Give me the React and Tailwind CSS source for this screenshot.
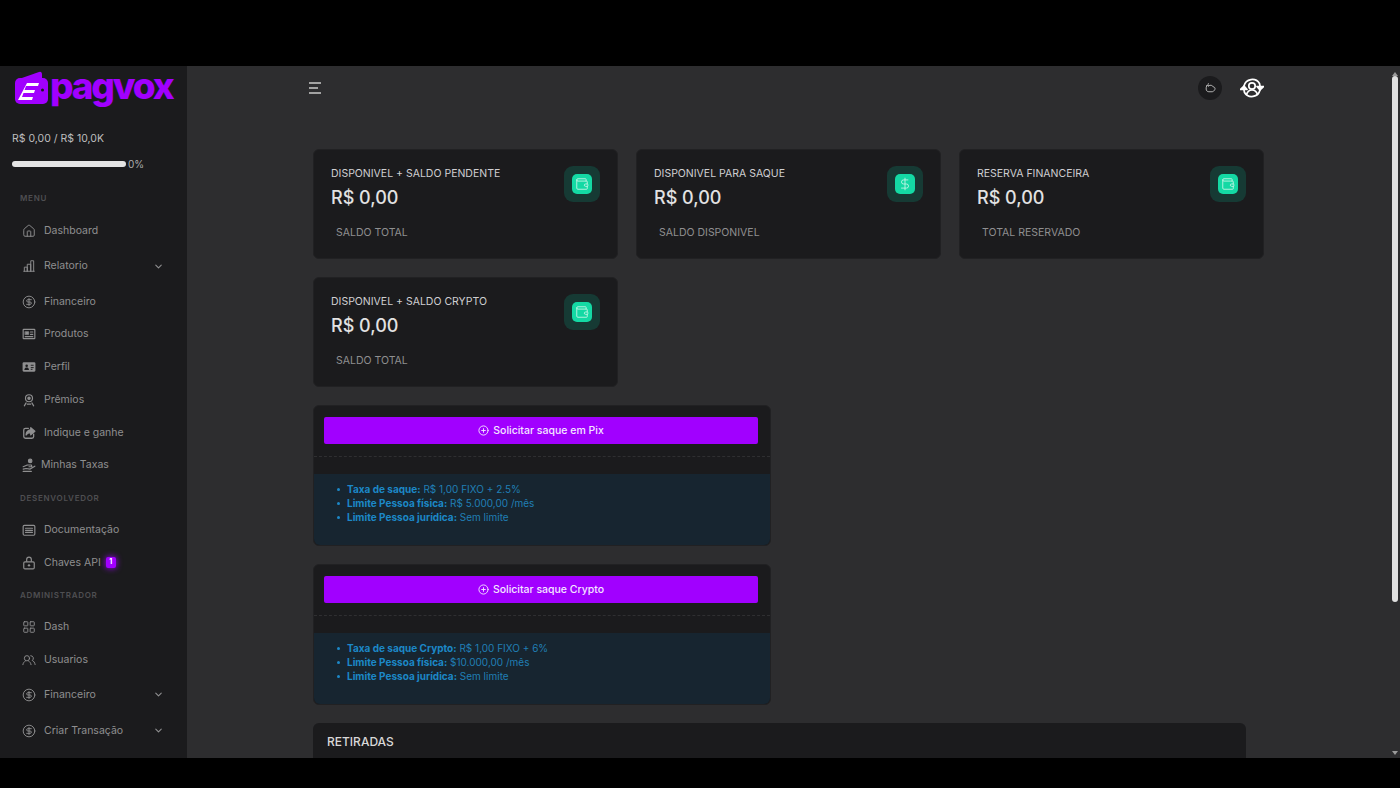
import React from "react";
import { House, ChevronDown, CircleDollarSign, Wallet, DollarSign, CirclePlus, LayoutGrid } from "lucide-react";

const Svg = ({ children, strokeWidth = 1.8, ...p }) => (
  <svg viewBox="0 0 24 24" fill="none" stroke="currentColor" strokeWidth={strokeWidth} strokeLinecap="round" strokeLinejoin="round" {...p}>{children}</svg>
);
const Bars = (p) => (
  <Svg {...p}><path d="M3 21h18M4 21v-7h5v7M9 21V9h6v12M15 21V3h5v18" /></Svg>
);
const ShareBox = (p) => (
  <Svg {...p} strokeWidth={2.2}>
    <path d="M11 4H6a3 3 0 0 0-3 3v11a3 3 0 0 0 3 3h11a3 3 0 0 0 3-3v-4" />
    <path d="M15 3l7 6-7 6v-3.500c-4 0-6.500 1-8 4 0-5 3-9 8-9z" fill="currentColor" />
  </Svg>
);
const NewsBox = (p) => (
  <Svg {...p} strokeWidth={2}>
    <rect x="2" y="4" width="20" height="16" rx="1" />
    <rect x="5.500" y="8" width="6" height="5" fill="currentColor" strokeWidth={1} />
    <path d="M14.500 8.500h4M14.500 12.500h4M5.500 16.500h13" />
  </Svg>
);
const Card = (p) => (
  <svg viewBox="0 0 24 24" {...p}>
    <rect x="1" y="4" width="22" height="16" rx="2" fill="currentColor" />
    <circle cx="8" cy="10" r="2.200" fill="#1b1b1d" />
    <path d="M4 17c.5-3 2-4 4-4s3.500 1 4 4z" fill="#1b1b1d" />
    <path d="M15 9h5M15 13h5M15 16h3" stroke="#1b1b1d" strokeWidth="1.600" />
  </svg>
);
const Medal = (p) => (
  <Svg {...p} strokeWidth={2}>
    <circle cx="12" cy="9" r="6" />
    <circle cx="12" cy="9" r="2" fill="currentColor" />
    <path d="M4 22l3-5M20 22l-3-5M9 19h6" />
  </Svg>
);
const HandUser = (p) => (
  <Svg {...p} strokeWidth={2}>
    <circle cx="14" cy="5" r="3" fill="currentColor" />
    <path d="M10 12h6l1 3h-5" />
    <path d="M2 15l7-3M2 19l5-1 7 1 8-5M2 23h14" />
  </Svg>
);
const DocBox = (p) => (
  <Svg {...p} strokeWidth={2}>
    <rect x="2" y="4" width="20" height="17" rx="2" />
    <path d="M6 9h12M6 12.500h12M6 16h12" />
  </Svg>
);
const LockBox = (p) => (
  <svg viewBox="0 0 24 24" {...p}>
    <path d="M8 10V6a4 4 0 0 1 8 0v4" fill="none" stroke="currentColor" strokeWidth="2" />
    <rect x="3" y="10" width="18" height="12" rx="2" fill="none" stroke="currentColor" strokeWidth="2" />
    <circle cx="12" cy="16" r="2" fill="currentColor" />
  </svg>
);
const TwoUsers = (p) => (
  <Svg {...p}>
    <circle cx="8.500" cy="9" r="4.500" />
    <path d="M1.500 20c.5-3 2-5 4-6M15.500 20c-.5-3-2-5-4-6" />
    <path d="M15 4.600a4.500 4.500 0 0 1 2.500 8.200c2.500 1 4.500 3.500 5 7" />
  </Svg>
);
const Logo = () => (
  <svg viewBox="0 0 36 36" className="w-[36px] h-[36px] shrink-0">
    <path d="M5 10 L25 3 q3 -1 3 3 v4 z" fill="#a100ff" />
    <rect x="1" y="9" width="33" height="26" rx="5" fill="#a100ff" />
    <path d="M13 14h12l-1 3H12l-1.500 4H21l-1 3H9.500L8 28h11l-1 3H4z" fill="#fff" />
    <circle cx="28.500" cy="21" r="1.500" fill="#1b1b1d" />
  </svg>
);
const MoonCloud = (p) => (
  <Svg {...p}>
    <path d="M8 3c-1 2-1 3 0 5M5 7c2-1 3-1 4 0 2-2 7-1 8 2 3 0 4 3 3 5-1 2-3 4-5 4H9c-3 0-5-2-5-5 0-2 0-4 1-6z" />
  </Svg>
);
const UserSwap = (p) => (
  <Svg {...p} strokeWidth={1.700}>
    <path d="M4 10a8.500 8.500 0 0 1 15.500-2.500l.5 2.500" />
    <path d="M20 14a8.500 8.500 0 0 1-15.500 2.500L4 14" />
    <path d="M23.500 10.500L20 14l-3-3.500z" fill="currentColor" />
    <path d="M.5 13.500L4 10l3 3.500z" fill="currentColor" />
    <circle cx="12" cy="10" r="3.200" />
    <path d="M6.500 18.500c1-3 3-4.500 5.500-4.500s4.500 1.500 5.500 4.500" />
  </Svg>
);
const Burger = () => (
  <svg viewBox="0 0 13 12" className="w-[13px] h-[12px]" stroke="#c9c9c9" strokeWidth="1.300">
    <path d="M0 1h12M0 6h9M0 11h12" />
  </svg>
);

const SideItem = ({ icon: I, label, h, chevron, badge, tight }) => (
  <div className={`flex items-center pl-[22px] pr-[23px] text-[#8f8f90] text-[10.500px] ${h}`}>
    <I className={`w-[14px] h-[14px] shrink-0 ${tight ? "mr-[5px]" : "mr-[8px]"}`} strokeWidth={1.6} />
    <span>{label}</span>
    {badge && <span className="ml-[5px] w-[10px] h-[11px] rounded-[2px] bg-[#a100ff] text-white text-[7px] font-bold flex items-center justify-center shadow-[0_0_6px_#a100ff]">{badge}</span>}
    {chevron && <ChevronDown className="ml-auto w-[11px] h-[11px]" strokeWidth={2.4} />}
  </div>
);
const SideHead = ({ label, h }) => (
  <div className={`flex items-center pl-[20px] text-[#4f4f52] text-[8px] font-semibold tracking-[0.09em] ${h}`}>{label}</div>
);

const StatCard = ({ title, foot, icon: I }) => (
  <div className="w-[305px] h-[110px] rounded-[6px] bg-[#1b1b1d] border border-[#212123] flex flex-col pl-[17px] pr-[17px] pt-[16px]">
    <div className="flex justify-between">
      <div>
        <div className="text-[#cfcfd2] text-[10.500px] leading-[16px]">{title}</div>
        <div className="text-[#e2e2e2] text-[18px] font-medium leading-[24px] mt-[4px]">R$ 0,00</div>
      </div>
      <div className="w-[36px] h-[36px] rounded-[9px] bg-[#163a34] flex items-center justify-center">
        <div className="w-[20px] h-[20px] rounded-[5px] bg-[#14d9a4] flex items-center justify-center">
          <I className="w-[14px] h-[14px] text-[#c5f5e6]" strokeWidth={1.5} />
        </div>
      </div>
    </div>
    <div className="text-[#8f8f90] text-[10.500px] pl-[5px] mt-[15px] leading-[16px]">{foot}</div>
  </div>
);

const WithdrawCard = ({ button, lines, mt }) => (
  <div className={`w-[458px] rounded-[6px] bg-[#1b1b1d] border border-[#212123] flex flex-col ${mt}`}>
    <div className="pl-[10px] pr-[12px] pt-[11px] pb-[12px] border-b border-dashed border-[#2f2f31]">
      <div className="h-[27px] rounded-[2px] bg-[#a100ff] text-[#f4e6ff] text-[10.500px] font-medium flex items-center justify-center gap-[4px]">
        <CirclePlus className="w-[11px] h-[11px]" strokeWidth={2} />
        {button}
      </div>
    </div>
    <div className="h-[17px]" />
    <div className="h-[71px] bg-[#172530] rounded-b-[6px] pt-[8px] pl-[23px]">
      <ul className="text-[#1c88c7] text-[10px] leading-[14.200px]">
        {lines.map(([b, t]) => (
          <li key={b} className="flex items-center">
            <span className="w-[3px] h-[3px] rounded-full bg-[#1c88c7] mr-[7px]" />
            <span><b className="font-bold">{b}</b> <span className="text-[#207fb5]">{t}</span></span>
          </li>
        ))}
      </ul>
    </div>
  </div>
);

export default function App() {
  return (
    <div className="w-[1400px] h-[788px] bg-black flex flex-col overflow-hidden font-['Inter','Liberation_Sans',sans-serif]">
      <div className="h-[66px] shrink-0 bg-black" />
      <div className="h-[692px] flex">
        <aside className="w-[187px] shrink-0 bg-[#1b1b1d] flex flex-col">
          <div className="h-[42px] pl-[14px] flex items-center">
            <Logo />
            <span className="text-[#a100ff] text-[37px] font-extrabold tracking-[-2.2px] leading-[42px] pb-[2px]">pagvox</span>
          </div>
          <div className="text-[#bdbdbd] text-[10.500px] pl-[12px] mt-[24px] leading-[14px]">R$ 0,00 / R$ 10,0K</div>
          <div className="flex items-center pl-[12px] mt-[12px] h-[12px]">
            <div className="w-[114px] h-[6px] rounded-full bg-[#e4e4e4]" />
            <span className="text-[#aeaeae] text-[10px] ml-[2px]">0%</span>
          </div>
          <div className="h-[20px]" />
          <SideHead label="MENU" h="h-[16px]" />
          <div className="h-[9px]" />
          <SideItem icon={House} label="Dashboard" h="h-[32px]" />
          <SideItem icon={Bars} label="Relatorio" h="h-[38px]" chevron />
          <SideItem icon={CircleDollarSign} label="Financeiro" h="h-[33px]" />
          <SideItem icon={NewsBox} label="Produtos" h="h-[32px]" />
          <SideItem icon={Card} label="Perfil" h="h-[33px]" />
          <SideItem icon={Medal} label="Prêmios" h="h-[33px]" />
          <SideItem icon={ShareBox} label="Indique e ganhe" h="h-[33px]" />
          <SideItem icon={HandUser} label="Minhas Taxas" h="h-[32px]" tight />
          <SideHead label="DESENVOLVEDOR" h="h-[33px]" />
          <SideItem icon={DocBox} label="Documentação" h="h-[32px]" />
          <SideItem icon={LockBox} label="Chaves API" h="h-[33px]" badge="1" />
          <SideHead label="ADMINISTRADOR" h="h-[32px]" />
          <SideItem icon={LayoutGrid} label="Dash" h="h-[32px]" />
          <SideItem icon={TwoUsers} label="Usuarios" h="h-[33px]" />
          <SideItem icon={CircleDollarSign} label="Financeiro" h="h-[37px]" chevron />
          <SideItem icon={CircleDollarSign} label="Criar Transação" h="h-[35px]" chevron />
        </aside>

        <main className="flex-1 bg-[#2d2d2f] flex overflow-hidden">
          <div className="flex-1 overflow-hidden pl-[126px]">
            <header className="h-[83px] w-[951px] flex items-center justify-between pb-[39px]">
              <div className="-ml-[4px]"><Burger /></div>
              <div className="flex items-center gap-[18px]">
                <div className="w-[24px] h-[24px] rounded-full bg-[#1b1b1d] flex items-center justify-center">
                  <MoonCloud className="w-[13px] h-[13px] text-[#b5b5b5]" />
                </div>
                <UserSwap className="w-[24px] h-[24px] text-white" />
              </div>
            </header>
            <div className="flex gap-[18px]">
              <StatCard title="DISPONIVEL + SALDO PENDENTE" foot="SALDO TOTAL" icon={Wallet} />
              <StatCard title="DISPONIVEL PARA SAQUE" foot="SALDO DISPONIVEL" icon={DollarSign} />
              <StatCard title="RESERVA FINANCEIRA" foot="TOTAL RESERVADO" icon={Wallet} />
            </div>
            <div className="mt-[18px]">
              <StatCard title="DISPONIVEL + SALDO CRYPTO" foot="SALDO TOTAL" icon={Wallet} />
            </div>
            <WithdrawCard mt="mt-[18px]" button="Solicitar saque em Pix" lines={[["Taxa de saque:", "R$ 1,00 FIXO + 2.5%"], ["Limite Pessoa física:", "R$ 5.000,00 /mês"], ["Limite Pessoa jurídica:", "Sem limite"]]} />
            <WithdrawCard mt="mt-[18px]" button="Solicitar saque Crypto" lines={[["Taxa de saque Crypto:", "R$ 1,00 FIXO + 6%"], ["Limite Pessoa física:", "$10.000,00 /mês"], ["Limite Pessoa jurídica:", "Sem limite"]]} />
            <div className="mt-[18px] w-[933px] h-[60px] rounded-t-[6px] bg-[#1b1b1d] pl-[14px] pt-[11px] text-[#d8d8d8] text-[12px] font-medium leading-[16px]">RETIRADAS</div>
          </div>
          <div className="w-[10px] shrink-0 flex flex-col items-center bg-[#2d2d2f]">
            <div className="mt-[6px] w-0 h-0 border-l-[3px] border-r-[3px] border-b-[4px] border-l-transparent border-r-transparent border-b-[#9a9a9a]" />
            <div className="w-[6px] h-[526px] rounded-full bg-[#e0e0e0]" />
            <div className="mt-auto mb-[3px] w-0 h-0 border-l-[3px] border-r-[3px] border-t-[4px] border-l-transparent border-r-transparent border-t-[#9a9a9a]" />
          </div>
        </main>
      </div>
    </div>
  );
}
